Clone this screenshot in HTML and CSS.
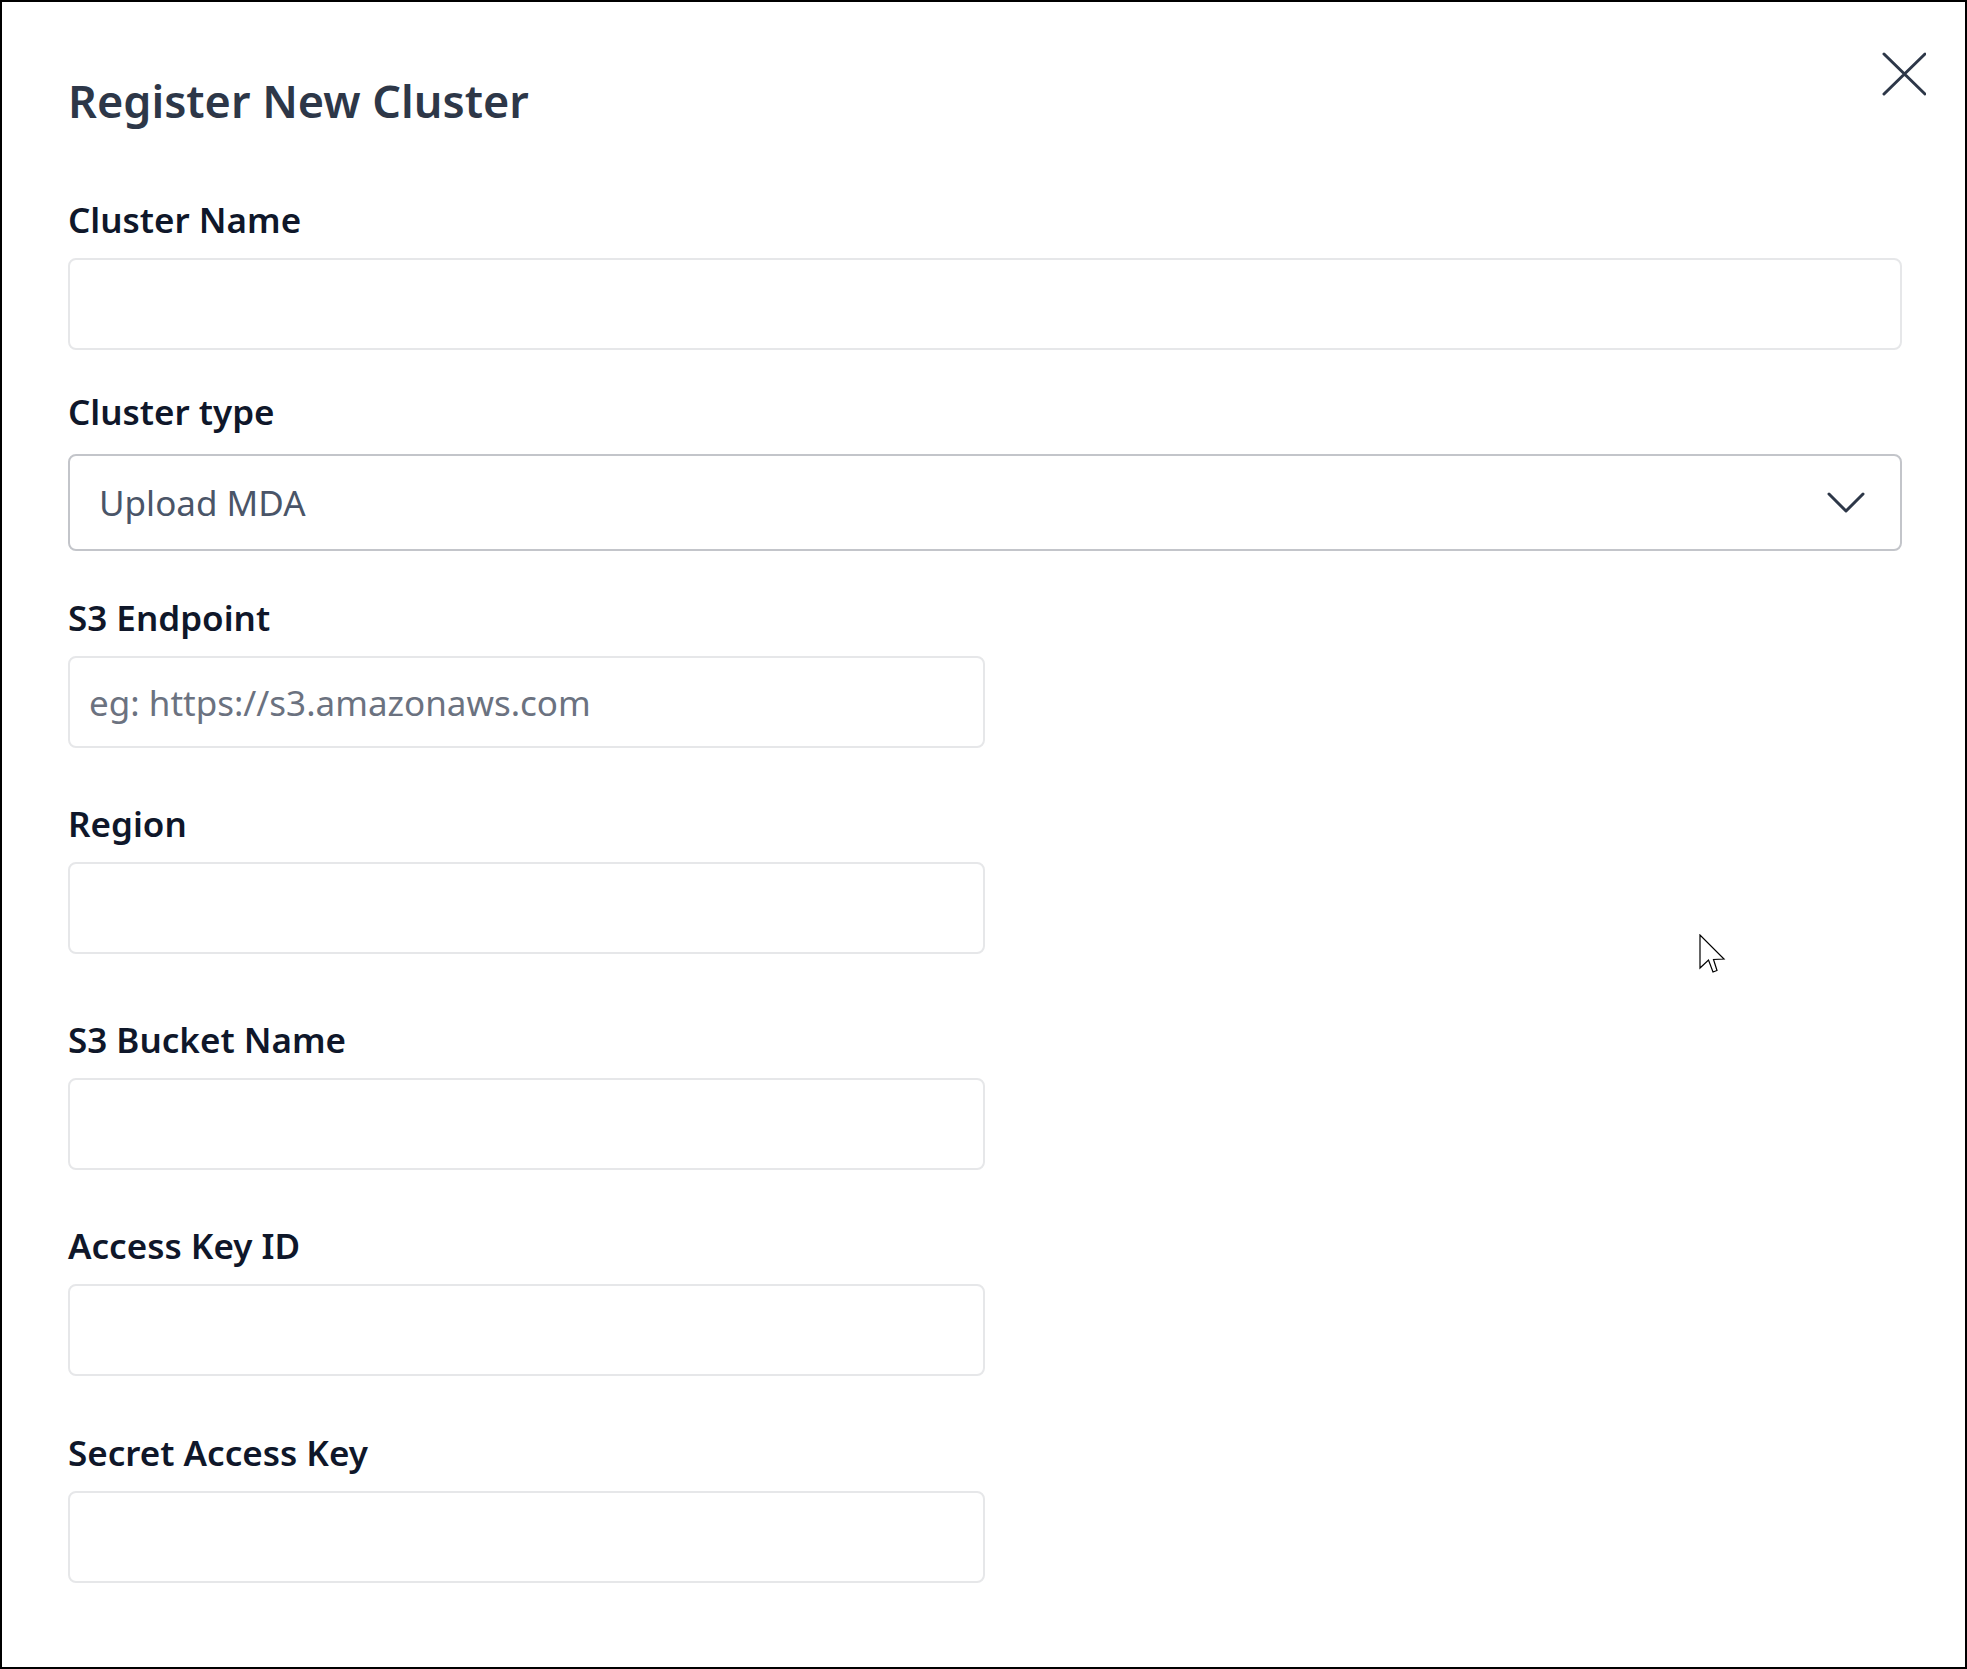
FILE: index.html
```html
<!DOCTYPE html>
<html lang="en">
<head>
<meta charset="utf-8">
<title>Register New Cluster</title>
<link rel="stylesheet" href="styles.css">
</head>
<body>
<div class="modal">
  <h1 class="modal-title">Register New Cluster</h1>
  <button class="close-btn" type="button" aria-label="Close">
    <svg width="44" height="44" viewBox="0 0 44 44"><path d="M2 2 L43 42 M43 2 L2 42" stroke="#2d3748" stroke-width="3" stroke-linecap="round" fill="none"/></svg>
  </button>

  <form class="form">
    <div class="field field-first">
      <label class="field-label">Cluster Name</label>
      <div class="text-input full"></div>
    </div>
    <div class="field field-type">
      <label class="field-label">Cluster type</label>
      <div class="select-box">
        <span class="select-value">Upload MDA</span>
        <svg class="chevron" width="38" height="24" viewBox="0 0 38 24"><path d="M2 3 L19 20 L36 3" stroke="#2d3748" stroke-width="3" stroke-linecap="round" stroke-linejoin="round" fill="none"/></svg>
      </div>
    </div>
    <div class="field field-endpoint">
      <label class="field-label">S3 Endpoint</label>
      <div class="text-input half"><span class="placeholder">eg: https://s3.amazonaws.com</span></div>
    </div>
    <div class="field">
      <label class="field-label">Region</label>
      <div class="text-input half"></div>
    </div>
    <div class="field field-wide-gap">
      <label class="field-label">S3 Bucket Name</label>
      <div class="text-input half"></div>
    </div>
    <div class="field">
      <label class="field-label">Access Key ID</label>
      <div class="text-input half"></div>
    </div>
    <div class="field field-last">
      <label class="field-label">Secret Access Key</label>
      <div class="text-input half"></div>
    </div>
  </form>

  <svg class="cursor" width="28" height="40" viewBox="0 0 28 40"><path d="M1 1 L1 34 L9.5 26 L14 38 L18 36.5 L14.5 25.5 L25 25 Z" fill="#fff" stroke="#000" stroke-width="1.2" stroke-linejoin="miter"/></svg>
</div>
</body>
</html>
```

FILE: styles.css
```css
* {
  box-sizing: border-box;
}

html, body {
  margin: 0;
  padding: 0;
  background: #ffffff;
}

body {
  font-family: "Noto Sans", "Open Sans", sans-serif;
}

.modal {
  position: relative;
  width: 1967px;
  height: 1669px;
  border: 2px solid #000;
  padding: 69px 63px 0 66px;
  background: #fff;
  overflow: hidden;
}

.modal-title {
  margin: 0;
  font-size: 45px;
  line-height: 60px;
  font-weight: 600;
  color: #2d3748;
  letter-spacing: 0;
}

.close-btn {
  position: absolute;
  top: 50px;
  right: 39px;
  width: 44px;
  height: 44px;
  padding: 0;
  border: 0;
  background: transparent;
  cursor: pointer;
}

.close-btn svg {
  display: block;
}

.form {
  display: flex;
  flex-direction: column;
}

.field {
  display: flex;
  flex-direction: column;
  margin-top: 56px;
}

.field-first {
  margin-top: 69px;
}

.field-type {
  margin-top: 42px;
}

.field-endpoint {
  margin-top: 47px;
}

.field-wide-gap {
  margin-top: 66px;
}

.field-last {
  margin-top: 57px;
}

.field-label {
  display: block;
  font-size: 35px;
  line-height: 40px;
  font-weight: 600;
  color: #0f172a;
  margin-bottom: 18px;
}

.field-type .field-label {
  margin-bottom: 22px;
}

.text-input {
  height: 92px;
  border: 2px solid #e6e7e9;
  border-radius: 8px;
  background: #fff;
  display: flex;
  align-items: center;
  padding: 0 19px;
}

.text-input.full {
  width: 1834px;
}

.text-input.half {
  width: 917px;
}

.placeholder {
  font-size: 35px;
  color: #6b7280;
  line-height: 1;
}

.select-box {
  width: 1834px;
  height: 97px;
  border: 2px solid #c3c5ca;
  border-radius: 8px;
  background: #fff;
  display: flex;
  align-items: center;
  justify-content: space-between;
  padding: 0 35px 0 29px;
}

.select-value {
  font-size: 35px;
  color: #4a5568;
  line-height: 1;
}

.chevron {
  display: block;
}

.cursor {
  position: absolute;
  left: 1697px;
  top: 932px;
}
```
